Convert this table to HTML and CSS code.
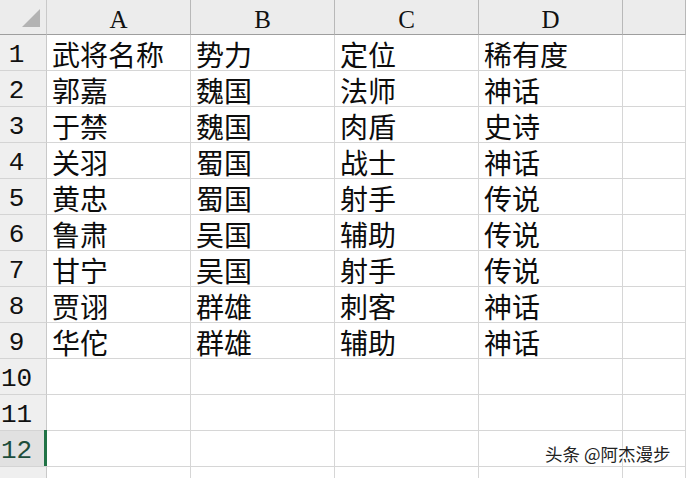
FILE: index.html
```html
<!DOCTYPE html>
<html lang="zh">
<head>
<meta charset="utf-8">
<link rel="stylesheet" href="styles.css">
</head>
<body>
<div class="sheet">
  <div class="corner"><span class="tri"></span></div>
  <div class="colhead">A</div>
  <div class="colhead">B</div>
  <div class="colhead">C</div>
  <div class="colhead">D</div>
  <div class="colhead"></div>

  <div class="rowhead">1</div><div class="cell">武将名称</div><div class="cell">势力</div><div class="cell">定位</div><div class="cell">稀有度</div><div class="cell"></div>
  <div class="rowhead">2</div><div class="cell">郭嘉</div><div class="cell">魏国</div><div class="cell">法师</div><div class="cell">神话</div><div class="cell"></div>
  <div class="rowhead">3</div><div class="cell">于禁</div><div class="cell">魏国</div><div class="cell">肉盾</div><div class="cell">史诗</div><div class="cell"></div>
  <div class="rowhead">4</div><div class="cell">关羽</div><div class="cell">蜀国</div><div class="cell">战士</div><div class="cell">神话</div><div class="cell"></div>
  <div class="rowhead">5</div><div class="cell">黄忠</div><div class="cell">蜀国</div><div class="cell">射手</div><div class="cell">传说</div><div class="cell"></div>
  <div class="rowhead">6</div><div class="cell">鲁肃</div><div class="cell">吴国</div><div class="cell">辅助</div><div class="cell">传说</div><div class="cell"></div>
  <div class="rowhead">7</div><div class="cell">甘宁</div><div class="cell">吴国</div><div class="cell">射手</div><div class="cell">传说</div><div class="cell"></div>
  <div class="rowhead">8</div><div class="cell">贾诩</div><div class="cell">群雄</div><div class="cell">刺客</div><div class="cell">神话</div><div class="cell"></div>
  <div class="rowhead">9</div><div class="cell">华佗</div><div class="cell">群雄</div><div class="cell">辅助</div><div class="cell">神话</div><div class="cell"></div>
  <div class="rowhead">10</div><div class="cell"></div><div class="cell"></div><div class="cell"></div><div class="cell"></div><div class="cell"></div>
  <div class="rowhead">11</div><div class="cell"></div><div class="cell"></div><div class="cell"></div><div class="cell"></div><div class="cell"></div>
  <div class="rowhead selected">12</div><div class="cell"></div><div class="cell"></div><div class="cell"></div><div class="cell"></div><div class="cell"></div>
  <div class="rowhead tail"></div><div class="cell tail"></div><div class="cell tail"></div><div class="cell tail"></div><div class="cell tail"></div><div class="cell tail"></div>
</div>
<div class="watermark">头条 @阿杰漫步</div>
</body>
</html>
```

FILE: styles.css
```css
html, body {
  margin: 0;
  padding: 0;
  background: #ffffff;
  overflow: hidden;
}
body {
  width: 686px;
  height: 478px;
  position: relative;
}
.sheet {
  display: grid;
  grid-template-columns: 47px 144px 144px 144px 144px 1fr;
  grid-template-rows: 35px repeat(12, 36px) 11px;
  width: 686px;
  height: 478px;
}
.sheet > div {
  box-sizing: border-box;
}
.corner {
  background: #ececec;
  border-right: 1px solid #c9c9c9;
  border-bottom: 1px solid #9e9e9e;
  position: relative;
}
.tri {
  position: absolute;
  left: 22px;
  top: 9px;
  width: 18px;
  height: 18px;
  background: #b3b3b3;
  clip-path: polygon(100% 0, 100% 100%, 0 100%);
}
.colhead {
  background: #ececec;
  border-right: 1px solid #b8b8b8;
  border-bottom: 1px solid #9e9e9e;
  font-family: "Liberation Serif", serif;
  font-size: 25px;
  color: #111111;
  text-align: center;
  padding-top: 5px;
  line-height: 29px;
}
.rowhead {
  background: #efefef;
  border-right: 1px solid #c9c9c9;
  border-bottom: 1px solid #d4d4d4;
  font-family: "Liberation Mono", monospace;
  font-size: 26px;
  color: #111111;
  padding-right: 13px;
  padding-top: 5px;
  text-align: center;
  line-height: 30px;
  position: relative;
}
.rowhead.selected {
  background: #e1e1e1;
  color: #1d4d3b;
}
.rowhead.selected::after {
  content: "";
  position: absolute;
  right: -1px;
  top: -1px;
  width: 3px;
  height: 36px;
  background: #217346;
}
.cell {
  border-right: 1px solid #d6d6d6;
  border-bottom: 1px solid #d6d6d6;
  font-family: "Noto Sans CJK SC", sans-serif;
  font-size: 28px;
  color: #0d0d0d;
  padding-left: 5px;
  padding-top: 3px;
  line-height: 32px;
  white-space: nowrap;
}
.rowhead.tail,
.cell.tail {
  border-bottom: none;
  padding: 0;
}
.watermark {
  position: absolute;
  left: 545px;
  top: 444px;
  font-family: "Noto Sans CJK SC", sans-serif;
  font-size: 17.5px;
  line-height: 20px;
  color: #222222;
  white-space: nowrap;
  text-shadow: 0 0 2px #ffffff, 0 0 2px #ffffff, 0 0 1px #ffffff;
}
```
